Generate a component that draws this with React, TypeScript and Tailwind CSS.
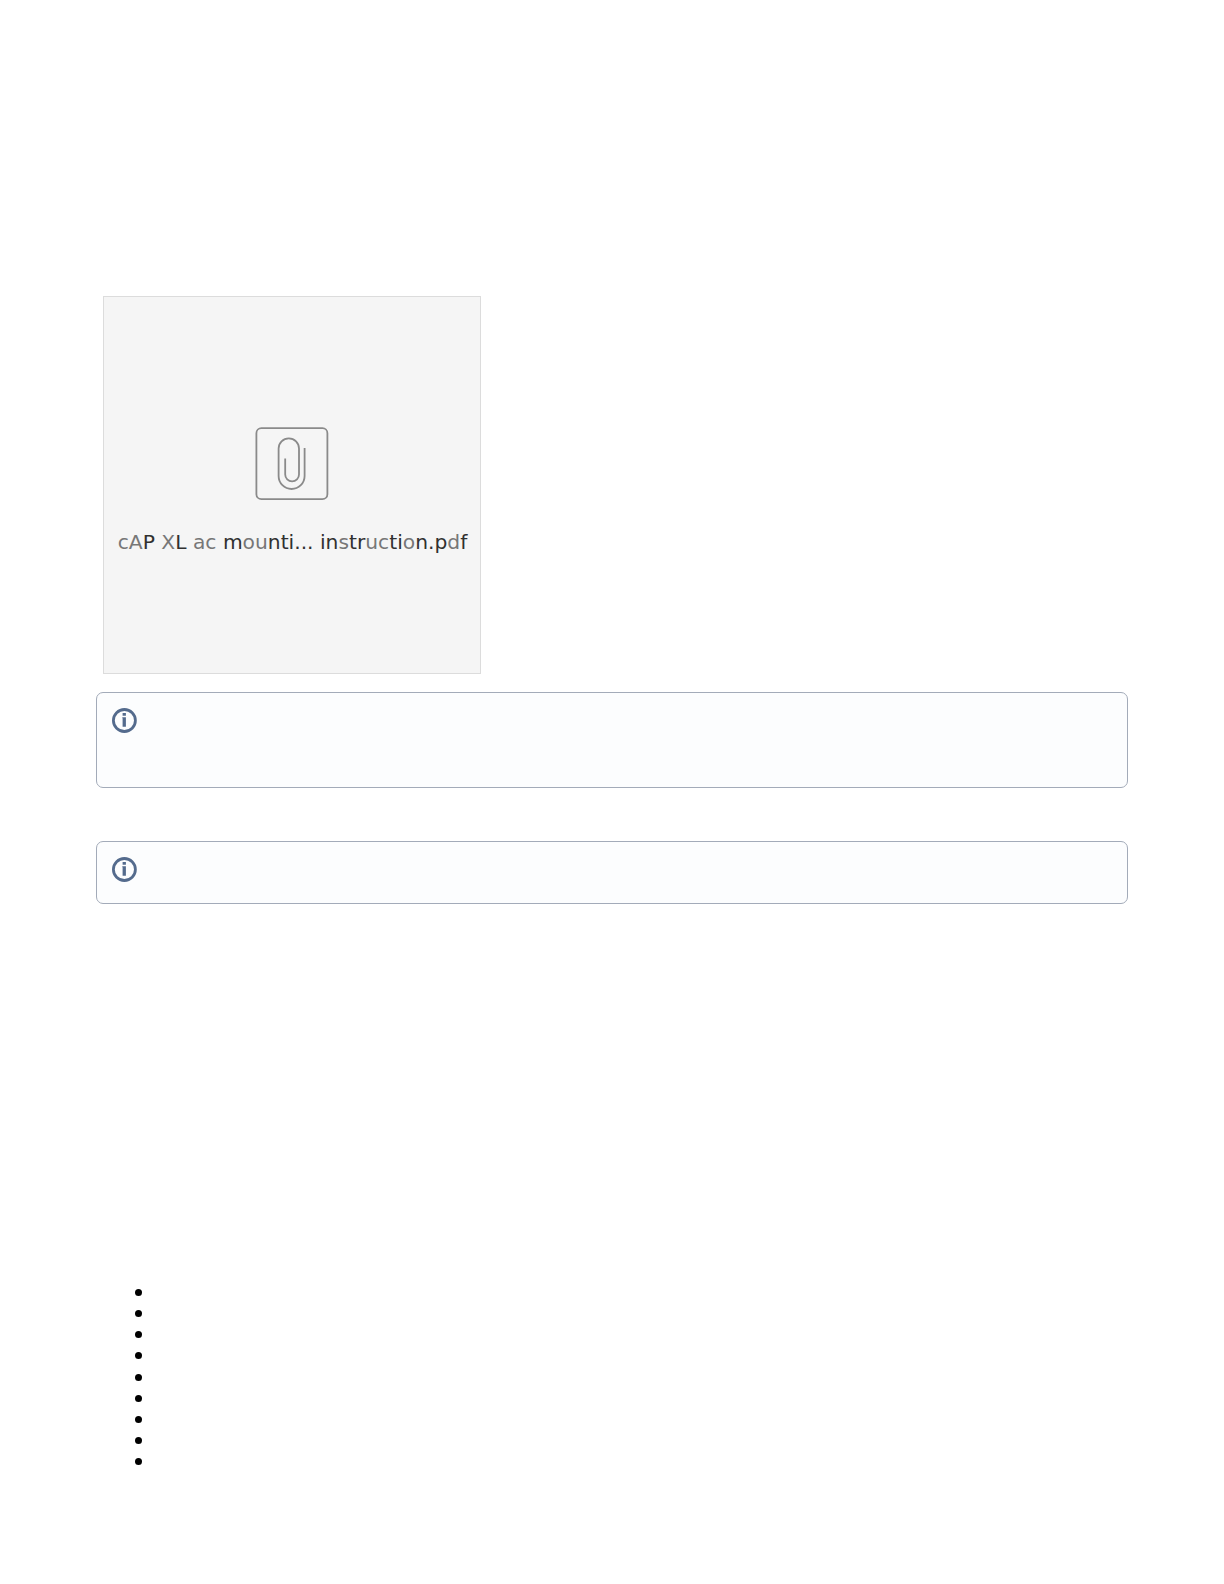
const bullets = [1, 2, 3, 4, 5, 6, 7, 8, 9];

// file name, glyphs alternate between soft and dark strokes
const fileName = [
  { text: 'cA', dark: false },
  { text: 'P', dark: true },
  { text: ' X', dark: false },
  { text: 'L', dark: true },
  { text: ' ac ', dark: false },
  { text: 'm', dark: true },
  { text: 'ou', dark: false },
  { text: 'nti... in', dark: true },
  { text: 's', dark: false },
  { text: 'tr', dark: true },
  { text: 'uc', dark: false },
  { text: 'ti', dark: true },
  { text: 'o', dark: false },
  { text: 'n.p', dark: true },
  { text: 'd', dark: false },
  { text: 'f', dark: true },
];

function PaperclipIcon() {
  return (
    <svg width="74" height="74" viewBox="0 0 74 74" fill="none" stroke="#8a8a8a">
      <rect x="1.4" y="1.2" width="71" height="71" rx="5" strokeWidth="1.8" />
      <path
        d="M30.2 31.5V47.5A6.9 6.9 0 0 0 44 47.5V21.5A10.2 10.2 0 0 0 23.6 21.5V49A13 13 0 0 0 49.6 49V21"
        strokeWidth="1.8"
      />
    </svg>
  );
}

function InfoIcon() {
  return (
    <svg width="25" height="25" viewBox="0 0 25 25" fill="none">
      <circle cx="12.4" cy="12.5" r="11" stroke="#546b8d" strokeWidth="2.8" />
      <path d="M10.6 5H13.9V7.8H10.6ZM10.3 9.3H13.9V18.8H10.6V10.2H10.3Z" fill="#546b8d" />
    </svg>
  );
}

function InfoPanel({ className }: { className: string }) {
  return (
    <div className={`rounded-[7px] border border-[#a3abb9] bg-[#fcfdfe] pt-[15px] pl-[15px] ${className}`}>
      <InfoIcon />
    </div>
  );
}

export default function App() {
  return (
    <div className="h-[1584px] w-[1224px] bg-white px-24 pt-[296px]">
      <div className="ml-[7px] flex h-[378px] w-[378px] flex-col items-center border border-[#dcdcdc] bg-[#f5f5f5] pt-[130px]">
        <PaperclipIcon />
        <p className="mt-[26.5px] pl-px font-['DejaVu_Sans',sans-serif] text-[20.25px] leading-[28px] whitespace-pre">
          {fileName.map((part, index) => (
            <span key={index} className={part.dark ? 'text-[#303030]' : 'text-[#777777]'}>
              {part.text}
            </span>
          ))}
        </p>
      </div>

      <InfoPanel className="mt-[18px] h-[95.5px]" />
      <InfoPanel className="mt-[53.5px] h-[62.5px]" />

      <ul className="mt-[385.5px] flex flex-col gap-[14.15px] pl-[39px]">
        {bullets.map((item) => (
          <li key={item} className="size-[7px] rounded-full bg-black" />
        ))}
      </ul>
    </div>
  );
}
